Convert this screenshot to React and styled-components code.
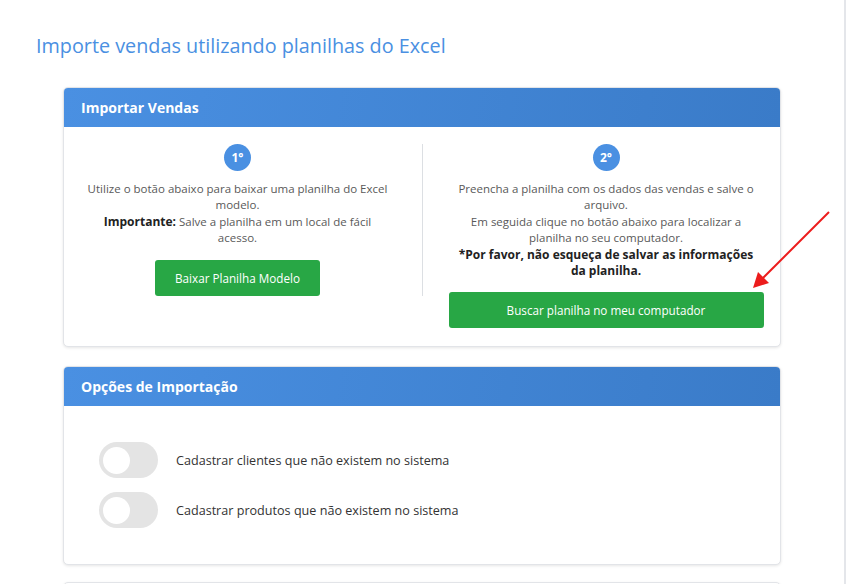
import styled, { createGlobalStyle } from "styled-components";

const GlobalStyle = createGlobalStyle`
  html, body {
    margin: 0;
    padding: 0;
    overflow: hidden;
    background: #fff;
  }
  * {
    box-sizing: border-box;
  }
`;

const Page = styled.div`
  position: relative;
  width: 846px;
  height: 584px;
  overflow: hidden;
  padding: 32px 0 0 36px;
  border-right: 2px solid #e4e6ea;
  font-family: "Open Sans", "Liberation Sans", sans-serif;
`;

const Title = styled.h1`
  margin: 0 0 28px;
  font-size: 19.8px;
  line-height: 27px;
  font-weight: 400;
  color: #4a90e2;
`;

const Cards = styled.div`
  margin-left: 27px;
  width: 718px;
  display: flex;
  flex-direction: column;
  gap: 19px;
`;

const Card = styled.section`
  background: #fff;
  border: 1px solid #e2e4e8;
  border-radius: 5px;
  box-shadow: 0 1px 3px rgba(0, 0, 0, 0.1);
  overflow: hidden;
`;

const CardHeader = styled.header`
  height: 39px;
  display: flex;
  align-items: center;
  padding: 0 17px;
  background: linear-gradient(100deg, #4a90e2 0%, #3a7bc8 100%);
  color: #fff;
  font-size: 14px;
  font-weight: 700;
`;

const StepsBody = styled.div`
  display: flex;
  justify-content: center;
  align-items: flex-start;
  padding: 17px 0 18px;
`;

const Step = styled.div`
  width: ${({ $divider }) => ($divider ? "342px" : "341px")};
  padding: ${({ $divider }) => ($divider ? "0 27px 0 0" : "0 0 0 26px")};
  border-right: ${({ $divider }) => ($divider ? "1px solid #dcdfe3" : "none")};
  display: flex;
  flex-direction: column;
  align-items: center;
  text-align: center;
`;

const Badge = styled.div`
  width: 27px;
  height: 27px;
  border-radius: 50%;
  background: #4a90e2;
  color: #fff;
  font-size: 12px;
  font-weight: 700;
  display: flex;
  align-items: center;
  justify-content: center;
  margin-bottom: 10px;
`;

const StepText = styled.p`
  width: 306px;
  margin: 0 0 13px;
  font-size: 11.5px;
  line-height: 16.4px;
  color: #595959;

  strong {
    color: #222;
    font-size: 12px;
    font-weight: 700;
  }
`;

const GreenButton = styled.button`
  height: 36px;
  width: ${({ $block }) => ($block ? "100%" : "auto")};
  padding: 0 20px;
  border: none;
  border-radius: 3px;
  background: #28a745;
  color: #fff;
  font-family: "Open Sans", "Liberation Sans", sans-serif;
  font-size: 11.7px;
  cursor: pointer;
`;

const OptionsBody = styled.div`
  padding: 36px 35px 36px;
  display: flex;
  flex-direction: column;
  gap: 14px;
`;

const OptionRow = styled.label`
  display: flex;
  align-items: center;
  gap: 18px;
  font-size: 12.6px;
  color: #333;
`;

const Toggle = styled.span`
  position: relative;
  width: 59px;
  height: 36px;
  border-radius: 18px;
  background: #e4e4e4;
  flex-shrink: 0;

  &::after {
    content: "";
    position: absolute;
    top: 4.5px;
    left: 4px;
    width: 27px;
    height: 27px;
    border-radius: 50%;
    background: #fff;
  }
`;

const NextCard = styled(Card)`
  margin-top: -2px;
  height: 120px;
`;

const Arrow = styled.svg`
  position: absolute;
  left: 0;
  top: 0;
  pointer-events: none;
`;

export default function App() {
  return (
    <>
      <GlobalStyle />
      <Page>
        <Title>Importe vendas utilizando planilhas do Excel</Title>
        <Cards>
          <Card>
            <CardHeader>Importar Vendas</CardHeader>
            <StepsBody>
              <Step $divider>
                <Badge>1°</Badge>
                <StepText>
                  Utilize o botão abaixo para baixar uma planilha do Excel modelo.
                  <br />
                  <strong>Importante:</strong> Salve a planilha em um local de fácil acesso.
                </StepText>
                <GreenButton>Baixar Planilha Modelo</GreenButton>
              </Step>
              <Step>
                <Badge>2°</Badge>
                <StepText>
                  Preencha a planilha com os dados das vendas e salve o arquivo.
                  <br />
                  Em seguida clique no botão abaixo para localizar a planilha no seu computador.
                  <br />
                  <strong>*Por favor, não esqueça de salvar as informações da planilha.</strong>
                </StepText>
                <GreenButton $block>Buscar planilha no meu computador</GreenButton>
              </Step>
            </StepsBody>
          </Card>
          <Card>
            <CardHeader>Opções de Importação</CardHeader>
            <OptionsBody>
              <OptionRow>
                <Toggle />
                Cadastrar clientes que não existem no sistema
              </OptionRow>
              <OptionRow>
                <Toggle />
                Cadastrar produtos que não existem no sistema
              </OptionRow>
            </OptionsBody>
          </Card>
          <NextCard />
        </Cards>
        <Arrow width="846" height="584" viewBox="0 0 846 584">
          <line x1="829" y1="212" x2="762" y2="279" stroke="#ec1c1c" strokeWidth="2" />
          <polygon points="753,288 758,272 769,283" fill="#ec1c1c" />
        </Arrow>
      </Page>
    </>
  );
}
